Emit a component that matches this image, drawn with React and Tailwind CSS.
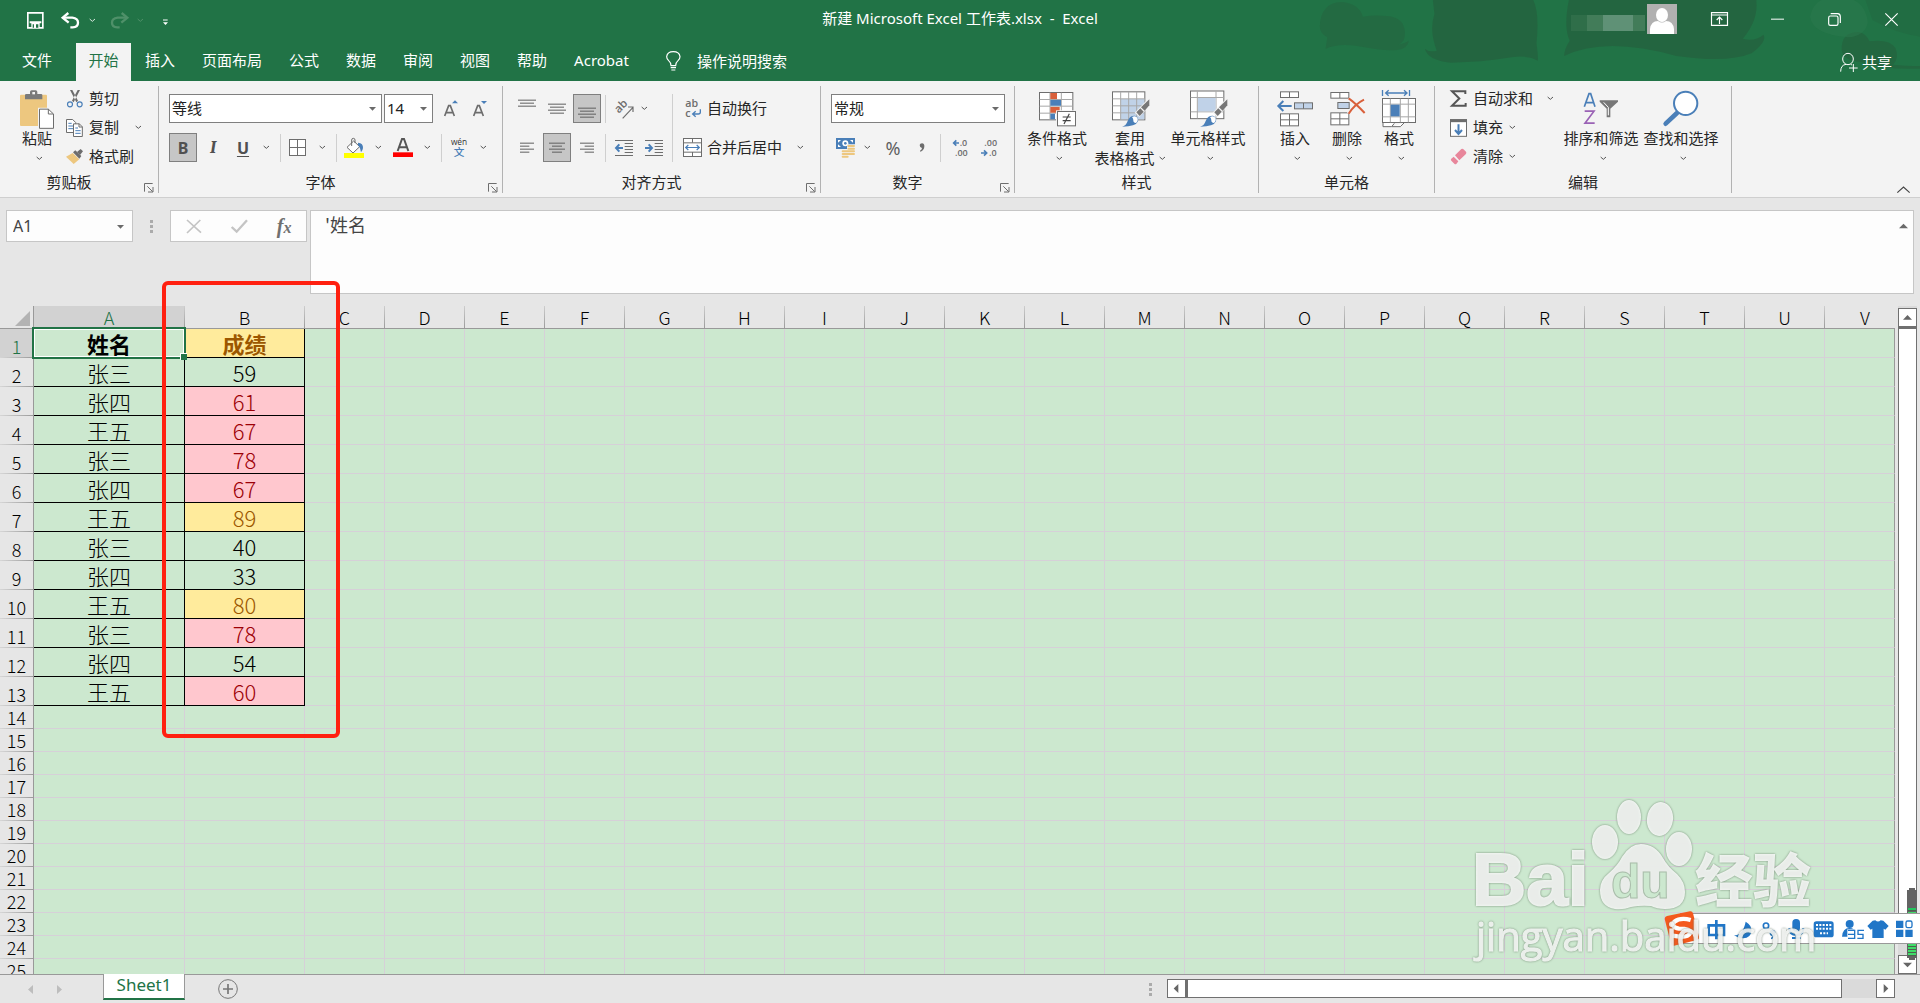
import React from 'react';

const GRAY = '#6d6d6d';
const BLUE = '#4a7fb8';
const SAND = '#edc77f';
const RUST = '#d9603b';

const ROWS = [
    ['姓名', '成绩', 'yellow'],
    ['张三', '59'],
    ['张四', '61', 'pink'],
    ['王五', '67', 'pink'],
    ['张三', '78', 'pink'],
    ['张四', '67', 'pink'],
    ['王五', '89', 'yellow'],
    ['张三', '40'],
    ['张四', '33'],
    ['王五', '80', 'yellow'],
    ['张三', '78', 'pink'],
    ['张四', '54'],
    ['王五', '60', 'pink'],
];

const TONES = {
    yellow: 'bg-[#ffeb9c] text-[#9c5700]',
    pink: 'bg-[#ffc7ce] text-[#9c0006]',
    none: 'bg-[#cce8cf] text-black',
};

const COLUMNS = 'ABCDEFGHIJKLMNOPQRSTUV'.split('');
const EMPTY_ROWS = [14, 15, 16, 17, 18, 19, 20, 21, 22, 23, 24, 25];
const MENU = ['插入', '页面布局', '公式', '数据', '审阅', '视图', '帮助', 'Acrobat'];

// Icons are drawn on a grid of three units to the pixel
function Icon({ w, h, className = '', children }) {
    return (
        <svg width={w} height={h} viewBox={`0 0 ${w * 3} ${h * 3}`} fill="none" className={`shrink-0 overflow-visible ${className}`} aria-hidden="true">
            {children}
        </svg>
    );
}

const Chevron = ({ color = '#555' }) => (
    <Icon w={7} h={5}>
        <path d="M2 3l8 7 8-7" stroke={color} strokeWidth="3" />
    </Icon>
);

const Triangle = ({ className = '' }) => (
    <Icon w={7} h={4} className={className}>
        <path d="M0 0h21L10.500 11z" fill="#6a6a6a" />
    </Icon>
);

const PasteIcon = () => (
    <Icon w={34} h={39}>
        <rect x="0" y="14" width="81" height="94" rx="3" fill={SAND} />
        <path d="M15 28V15q0-3 4-3h11V6q0-5 5-5h12q5 0 5 5v6h11q4 0 4 3v13z" fill="#7a7a7a" />
        <rect x="37" y="6" width="8" height="7" fill="#f3f3f3" />
        <path d="M54 53h35l16 16v50H54z" fill="#f3f3f3" />
        <path d="M58.500 57.500H85L100.500 72v43h-42z" fill="#fff" stroke={GRAY} strokeWidth="3" />
        <path d="M85 57v15h15" stroke={GRAY} strokeWidth="3" />
    </Icon>
);

const CutIcon = () => (
    <Icon w={16} h={18}>
        <path d="M9 0l7 0 17 32-5 5zM39 0l-7 0-17 32 5 5z" fill={GRAY} />
        <circle cx="9" cy="43" r="7.500" stroke={BLUE} strokeWidth="3.500" />
        <circle cx="38" cy="43" r="7.500" stroke={BLUE} strokeWidth="3.500" />
    </Icon>
);

const CopyIcon = () => (
    <Icon w={17} h={18}>
        <path d="M1.500 1.500H20l9 9v30H1.500z" fill="#fff" stroke={GRAY} strokeWidth="3" />
        <path d="M7 13h10M7 21h14M7 29h14" stroke={BLUE} strokeWidth="3" />
        <path d="M22.500 14.500H40l9 9v29H22.500z" fill="#fff" stroke={GRAY} strokeWidth="3" />
        <path d="M39 14v10h10" stroke={GRAY} strokeWidth="3" />
        <path d="M28 27h8M28 35h16M28 43h16" stroke={BLUE} strokeWidth="3" />
    </Icon>
);

const BrushIcon = () => (
    <Icon w={17} h={15}>
        <path d="M0 23L20 12l20 19-17 14z" fill={SAND} />
        <path d="M21 10l7-6 18 17-6 8z" fill={GRAY} />
        <path d="M33 9L44 0l7 7-9 11z" fill={GRAY} />
    </Icon>
);

const GrowFont = ({ down }) => (
    <Icon w={14} h={17}>
        <path d="M2 48L14 17h5l12 31M7 38h19" stroke={GRAY} strokeWidth="5" />
        {down ? <path d="M24 3h18l-9 9z" fill={BLUE} /> : <path d="M24 10h18L33 1z" fill={BLUE} />}
    </Icon>
);

const BorderIcon = () => (
    <Icon w={17} h={17}>
        <rect x="1.500" y="1.500" width="48" height="48" fill="#fff" stroke={GRAY} strokeWidth="3" />
        <path d="M25.500 2v47M2 25.500h47" stroke={GRAY} strokeWidth="3" />
    </Icon>
);

const FillIcon = () => (
    <Icon w={20} h={20}>
        <path d="M9 28L29 9l18 17-20 19z" fill="#fff" stroke={GRAY} strokeWidth="3" />
        <path d="M23 24V6q0-5 5-5t5 5v9" stroke={GRAY} strokeWidth="3" />
        <path d="M42 14q16 1 15 16-1 8-6 13-1-14-9-22z" fill={BLUE} />
        <rect x="0" y="45" width="60" height="15" fill="#ff0" />
    </Icon>
);

const FontColorIcon = () => (
    <Icon w={20} h={19}>
        <path d="M14 39L27 3h6l13 36M19 28h22" stroke="#555" strokeWidth="6" />
        <rect x="0" y="43" width="60" height="14" fill="#f00" />
    </Icon>
);

// Paragraph lines; each entry is [x1, x2, y]
function Lines({ w = 18, h = 18, lines }) {
    return (
        <Icon w={w} h={h}>
            {lines.map(([a, b, y]) => (
                <path key={y} d={`M${a} ${y}.5H${b}`} stroke="#5f5f5f" strokeWidth="3" />
            ))}
        </Icon>
    );
}

const OrientationIcon = () => (
    <Icon w={20} h={20}>
        <text x="14" y="44" transform="rotate(-45 14 44)" fontSize="34" fontWeight="600" fill={GRAY} fontFamily="Open Sans">ab</text>
        <path d="M26 58L57 25M42 24h15v15" stroke={GRAY} strokeWidth="3.500" />
    </Icon>
);

const IndentIcon = ({ right }) => (
    <Icon w={18} h={18}>
        <path d="M0 4.500h54M0 49.500h54M29 13.500h25M29 22.500h25M29 31.500h25M29 40.500h25" stroke={GRAY} strokeWidth="3" />
        {right
            ? <path d="M0 27h19M11 16l10 11-10 11" stroke={BLUE} strokeWidth="6" />
            : <path d="M4 27h20M13 16L3 27l10 11" stroke={BLUE} strokeWidth="6" />}
    </Icon>
);

const WrapIcon = () => (
    <Icon w={19} h={18}>
        <text x="7" y="21" fontSize="32" fontWeight="600" fill={GRAY} fontFamily="Open Sans">ab</text>
        <text x="7" y="50" fontSize="32" fontWeight="600" fill={GRAY} fontFamily="Open Sans">c</text>
        <path d="M52 28v9q0 5-6 5H30M38 34l-9 8 9 8" stroke={BLUE} strokeWidth="4" />
    </Icon>
);

const MergeIcon = () => (
    <Icon w={19} h={19}>
        <rect x="1.500" y="1.500" width="54" height="54" fill="#fff" stroke={GRAY} strokeWidth="3" />
        <path d="M2 14.500h54M2 42.500h54M28.500 2v12M28.500 42v13" stroke={GRAY} strokeWidth="3" />
        <path d="M8 28.500h41M16 21l-8 7.500 8 7.500M41 21l8 7.500-8 7.500" stroke={BLUE} strokeWidth="3.500" />
    </Icon>
);

const MoneyIcon = () => (
    <Icon w={19} h={19}>
        <rect x="0" y="0" width="57" height="33" fill={BLUE} />
        <path d="M6 6h9l-9 8zM51 6h-9l9 8zM6 27h9l-9-8z" fill="#fff" />
        <circle cx="28" cy="16" r="9" fill="#fff" />
        <circle cx="28" cy="16" r="4" fill={BLUE} />
        <path d="M33 19h24v38H16V34h17z" fill="#f3f3f3" />
        <path d="M37 24h17M37 32h17M37 40h17M37 48h17M20 40h15M20 48h15M20 56h15" stroke={SAND} strokeWidth="6" strokeLinecap="round" />
    </Icon>
);

function DecimalIcon({ more }) {
    return (
        <Icon w={17} h={18}>
            <text x={more ? 20 : 10} y="22" fontSize="27" fontWeight="600" fill={GRAY} fontFamily="Open Sans">{more ? '.0' : '.00'}</text>
            <text x={more ? 6 : 24} y="51" fontSize="27" fontWeight="600" fill={GRAY} fontFamily="Open Sans">{more ? '.00' : '.0'}</text>
            {more
                ? <path d="M2 12h16M10 4l-8 8 8 8" stroke={BLUE} strokeWidth="5" />
                : <path d="M0 42h17M9 34l8 8-8 8" stroke={BLUE} strokeWidth="5" />}
        </Icon>
    );
}

const CondIcon = () => (
    <Icon w={36} h={36}>
        <rect x="1.500" y="4.500" width="100" height="82" fill="#fff" stroke={GRAY} strokeWidth="3" />
        <path d="M33 5v81M67 5v81M2 25.500h99M2 45.500h99M2 66.500h99" stroke="#a8a8a8" strokeWidth="3" />
        <path d="M34 6h20v18H34zM34 48h28v17H34z" fill={RUST} />
        <path d="M34 27h32v17H34zM34 68h14v17H34z" fill={BLUE} />
        <rect x="51" y="58" width="62" height="50" fill="#f3f3f3" />
        <rect x="55.500" y="61.500" width="54" height="43" fill="#fff" stroke={GRAY} strokeWidth="3" />
        <path d="M71 78h24M71 89h24M91 68L75 99" stroke="#444" strokeWidth="3.500" />
    </Icon>
);

const PaintBrush = () => (
    <>
        <path d="M114 20v24L82 78 68 65 99 33z" fill="#f3f3f3" />
        <path d="M112 25v18l-14 16-11-10z" fill="#777" />
        <path d="M85 52l10 10-12 13-10-11z" fill="#777" />
        <path d="M30 107q12-2 17-17 6-17 22-16 12 5 9 17-6 16-48 16z" fill={BLUE} />
        <path d="M60 78q10-6 16 2 4 8-4 16-9-1-8-8 0-6-4-10z" fill="#fff" />
    </>
);

const TableFormatIcon = () => (
    <Icon w={36} h={36}>
        <rect x="1.500" y="2.500" width="97" height="84" fill="#fff" stroke={GRAY} strokeWidth="3" />
        <rect x="26" y="24" width="71" height="61" fill="#c0d2e8" />
        <path d="M26 3v83M50 3v83M74 3v83M2 23.500h96M2 44.500h96M2 65.500h96" stroke="#a8a8a8" strokeWidth="3" />
        <PaintBrush />
    </Icon>
);

const CellStyleIcon = () => (
    <Icon w={36} h={36}>
        <rect x="1.500" y="0" width="100" height="83" fill="#fff" stroke={GRAY} strokeWidth="3" />
        <path d="M22 1v81M78 1v81M2 19.500h99M2 62.500h99" stroke="#a8a8a8" strokeWidth="3" />
        <rect x="24" y="21" width="53" height="40" fill="#c0d2e8" />
        <PaintBrush />
    </Icon>
);

const InsertIcon = () => (
    <Icon w={36} h={36}>
        <g stroke={GRAY} strokeWidth="3" fill="#fff">
            <rect x="10.500" y="2.500" width="54" height="17" />
            <path d="M37.500 3v16" />
            <rect x="10.500" y="68.500" width="54" height="36" />
            <path d="M37.500 69v35M11 86.500h53" />
            <rect x="52.500" y="35.500" width="54" height="18" fill="#c0d2e8" />
            <path d="M79.500 36v17" />
        </g>
        <path d="M4 45h40M19 30L4 45l15 15" stroke={BLUE} strokeWidth="6" />
    </Icon>
);

const DeleteIcon = () => (
    <Icon w={34} h={36}>
        <g stroke={GRAY} strokeWidth="3" fill="#fff">
            <rect x="2.500" y="4.500" width="54" height="17" />
            <path d="M29.500 5v16" />
            <rect x="2.500" y="65.500" width="54" height="36" />
            <path d="M29.500 66v35M3 83.500h53" />
            <rect x="23.500" y="34.500" width="34" height="18" fill="#c0d2e8" />
        </g>
        <path d="M56 22q20 14 48 44M102 26Q74 40 56 68" stroke="#f3f3f3" strokeWidth="12" />
        <path d="M56 22q20 14 48 44M102 26Q74 40 56 68" stroke={RUST} strokeWidth="6" />
    </Icon>
);

const FormatIcon = () => (
    <Icon w={34} h={38}>
        <path d="M1.500 0v18M82.500 0v18M10 9h66M20 1l-9 8 9 8M66 1l9 8-9 8" stroke={BLUE} strokeWidth="4" />
        <path d="M3 98v12h26l8-10M30 110h25l12-12" stroke={GRAY} strokeWidth="3" fill="#fff" />
        <rect x="1.500" y="25.500" width="99" height="72" fill="#fff" stroke={GRAY} strokeWidth="3" />
        <path d="M25 26v71M55 26v71M79 26v71M2 42.500h98M2 80.500h98" stroke="#a8a8a8" strokeWidth="3" />
        <rect x="26" y="44" width="27" height="35" fill={BLUE} />
    </Icon>
);

const SumIcon = () => (
    <Icon w={17} h={17}>
        <path d="M46 12V3.500H6l22 22-22 22h41V39" stroke="#555" strokeWidth="6" />
    </Icon>
);

const FillDownIcon = () => (
    <Icon w={17} h={18}>
        <rect x="1.500" y="2" width="48" height="50" fill="#fff" stroke={GRAY} strokeWidth="3" />
        <path d="M0 5h51" stroke={GRAY} strokeWidth="9" />
        <path d="M25.500 16v27M15 33l10.500 12L36 33" stroke={BLUE} strokeWidth="6" />
    </Icon>
);

const EraserIcon = () => (
    <Icon w={17} h={17}>
        <path d="M15 22L34 3q4-2 8 2l6 6q3 4-1 8L28 37z" fill="#e8869b" />
        <path d="M11 26L25 40l-6 8q-3 2-6-1l-9-9q-3-3 0-6z" fill="#e8869b" />
    </Icon>
);

const SortIcon = () => (
    <Icon w={36} h={36}>
        <path d="M4 47L18 8h5l13 39M9 35h22" stroke={BLUE} strokeWidth="5" />
        <path d="M5 60.500h28L6 96.500h29" stroke="#9a62b5" strokeWidth="5" />
        <path d="M50 28h55v4L82 53v26H71V53L50 32z" fill="#777" />
        <path d="M62 34l14 15v24" stroke="#fff" strokeWidth="3" />
    </Icon>
);

const FindIcon = () => (
    <Icon w={36} h={36}>
        <path d="M8 98L42 66" stroke={BLUE} strokeWidth="14" strokeLinecap="round" />
        <circle cx="68" cy="37" r="35" fill="#fff" stroke={BLUE} strokeWidth="6" />
    </Icon>
);

const UndoIcon = ({ color }) => (
    <Icon w={19} h={17}>
        <path d="M6 17h28q17 2 17 15t-16 14H28" stroke={color} strokeWidth="7" />
        <path d="M22 3L5 17l18 15" stroke={color} strokeWidth="7" />
    </Icon>
);

function Tool({ label, active, onClick, children }) {
    return (
        <button
            type="button"
            aria-label={label}
            onClick={onClick}
            className={`flex h-[29px] w-7 shrink-0 items-center justify-center ${active ? 'border border-[#7f7f7f] bg-[#c6c6c6]' : ''}`}
        >
            {children}
        </button>
    );
}

function WideTool({ label, children }) {
    return (
        <div className="flex h-[29px] items-center">
            <button type="button" aria-label={label} className="flex h-full w-[33px] items-center justify-center">{children}</button>
            <Drop label={`${label}选项`} />
        </div>
    );
}

const Drop = ({ label }) => (
    <button type="button" aria-label={label} className="flex h-[29px] w-4 shrink-0 items-center justify-center">
        <Chevron />
    </button>
);

const Divider = () => <div className="h-7 w-px shrink-0 bg-[#cfcfcf]" />;

function BigButton({ icon, label, second, className }) {
    return (
        <button type="button" className={`flex shrink-0 flex-col items-center whitespace-nowrap ${className}`}>
            <span className="flex h-[38px] items-center">{icon}</span>
            <span className="leading-5">{label}</span>
            {second ? (
                <span className="flex items-center gap-1 leading-5">{second}<Chevron /></span>
            ) : (
                <span className="flex h-5 items-center pl-1"><Chevron /></span>
            )}
        </button>
    );
}

function SmallButton({ icon, label, chevron }) {
    return (
        <button type="button" className="flex h-[29px] items-center gap-1.5 whitespace-nowrap">
            <span className="flex w-[17px] justify-center">{icon}</span>
            <span>{label}</span>
            {chevron && <span className={chevron}><Chevron /></span>}
        </button>
    );
}

function Group({ label, launcher, className, children }) {
    return (
        <section aria-label={label} className="mt-[5px] flex h-[107px] shrink-0 border-r border-[#b2b2b2]">
            <div className={`relative flex flex-col ${className}`}>
                <div className="h-[88px]">{children}</div>
                <div className={`text-center leading-[22px] ${launcher ? 'pr-5' : ''}`}>{label}</div>
                {launcher && (
                    <button type="button" aria-label={`${label}设置`} className="absolute right-1 bottom-0">
                        <Icon w={10} h={10}>
                            <path d="M1.500 26V1.500H26M10 10l16 16M27 12v15H12" stroke={GRAY} strokeWidth="3" />
                        </Icon>
                    </button>
                )}
            </div>
        </section>
    );
}

function Picker({ label, value, options, className }) {
    return (
        <div className={`relative h-[29px] border border-[#7f7f7f] bg-white ${className}`}>
            <select aria-label={label} defaultValue={value} className="h-full w-full appearance-none bg-transparent px-0.5 text-[#222] outline-none">
                {options.map((o) => <option key={o}>{o}</option>)}
            </select>
            <Triangle className="pointer-events-none absolute top-3 right-[5px]" />
        </div>
    );
}

// Speech bubbles behind the right end of the title bar
const Bubbles = () => (
    <svg className="pointer-events-none absolute top-0 right-0" width="620" height="81" viewBox="0 0 1568 243" preserveAspectRatio="none" aria-hidden="true">
        <g fill="#24643f">
            <path d="M50 80Q52 8 105 6q44 4 54 44 30-6 60-2 50 4 46 60-2 20-16 26 20-6 26-12-2 24-30 28-30 4-100-12-50-8-80 8 0-2 4-34-18-12-19-32z" opacity=".6" />
            <path d="M336 0H590q16 40 8 130 4 30 4 52-30-20-80-8-60 12-140 14-60-8-66-42 10 12 30 6-20-60-6-110z" opacity=".9" />
            <path d="M680 0h474q6 60-34 116 30 10 52-12 10 20-30 56-60 30-190 8-180-60-284 0 0-20 14-46-16-40-2-122z" opacity=".9" />
            <path d="M1370 150q-2-54 42-54 20 4 28 28 50-8 66 20 10 30-6 50 30 4 68 4v8q-90 4-150-20-46-6-48-36z" opacity=".8" />
            <path d="M1430 0h138v110q-60-10-120-50z" opacity=".4" />
        </g>
        <path d="M1290 50Q1300-10 1360-12q70 6 76 80-8 40-50 44-90-10-96-62z" fill="#2b7a4e" opacity=".5" />
    </svg>
);

function TitleBar() {
    return (
        <div className="relative flex h-[43px] items-start justify-between">
            <div className="flex h-10 items-center pl-[27px]">
                <button type="button" aria-label="保存">
                    <Icon w={17} h={17}>
                        <path d="M2.500 2.500h45v45h-45z" stroke="#fff" strokeWidth="5" />
                        <path d="M8 28h35v6H8zM13 34h25v13H13z" fill="#fff" />
                        <path d="M17 37h4v10h-4zM27 37h7v10h-7z" fill="#217346" />
                    </Icon>
                </button>
                <button type="button" aria-label="撤消" className="ml-[17px]"><UndoIcon color="#fff" /></button>
                <span className="ml-[9px]"><Chevron color="#d8e8de" /></span>
                <button type="button" aria-label="恢复" className="ml-3.5 -scale-x-100"><UndoIcon color="#4f9069" /></button>
                <span className="ml-2"><Chevron color="#4f9069" /></span>
                <button type="button" aria-label="自定义快速访问工具栏" className="ml-[18px] pt-1">
                    <Icon w={7} h={7}>
                        <path d="M3 3h14" stroke="#fff" strokeWidth="3" />
                        <path d="M3 10h15l-7.500 8z" fill="#fff" />
                    </Icon>
                </button>
            </div>
            <h1 className="absolute inset-x-0 top-0 text-center leading-9 whitespace-pre">新建 Microsoft Excel 工作表.xlsx  -  Excel</h1>
            <div className="relative flex h-[38px] items-center pr-[22px]">
                <div className="mr-0.5 flex h-4 pt-1" aria-hidden="true">
                    <div className="h-4 w-4 bg-[#2f6e49]" />
                    <div className="h-4 w-4 bg-[#427c59]" />
                    <div className="h-4 w-[30px] bg-[#5f9176]" />
                    <div className="h-4 w-3 bg-[#427c59]" />
                </div>
                <svg width="30" height="30" viewBox="0 0 30 30" role="img" aria-label="帐户">
                    <rect width="30" height="30" fill="#b0b0b0" />
                    <ellipse cx="15" cy="11" rx="6" ry="7" fill="#fff" />
                    <path d="M3 30V25q1-8 8-8 4 3 8 0 7 0 8 8v5z" fill="#fff" />
                </svg>
                <button type="button" aria-label="功能区显示选项" className="ml-[34px]">
                    <Icon w={17} h={14}>
                        <path d="M1.500 2h48v38h-48zM2 9h47" stroke="#fff" strokeWidth="3.500" />
                        <path d="M25.500 36V16M17 24l8.500-9 8.500 9" stroke="#fff" strokeWidth="3.500" />
                    </Icon>
                </button>
                <button type="button" aria-label="最小化" className="ml-[43px]">
                    <Icon w={13} h={13}><path d="M0 18.500h39" stroke="#fff" strokeWidth="3" /></Icon>
                </button>
                <button type="button" aria-label="还原" className="ml-11">
                    <Icon w={13} h={13}>
                        <rect x="2" y="9" width="28" height="28" rx="5" stroke="#fff" strokeWidth="3.500" />
                        <path d="M8 2h21q8 1 8 9v19" stroke="#fff" strokeWidth="3.500" />
                    </Icon>
                </button>
                <button type="button" aria-label="关闭" className="ml-11">
                    <Icon w={13} h={13}><path d="M1 1l37 37M38 1L1 38" stroke="#fff" strokeWidth="3.500" /></Icon>
                </button>
            </div>
        </div>
    );
}

function Menu() {
    return (
        <nav className="relative flex h-[38px] items-stretch leading-[34px]">
            <button type="button" className="w-[76px] pb-1 pl-[22px] text-left">文件</button>
            <button type="button" className="w-[55px] bg-[#f3f3f3] pb-1 text-center text-[#217346]">开始</button>
            {MENU.map((item) => (
                <button key={item} type="button" className="ml-px px-[13px] pb-1">{item}</button>
            ))}
            <button type="button" className="ml-6 flex items-center gap-4 pb-0.5">
                <Icon w={15} h={21}>
                    <path d="M15 44q0-9-7-15-6-6-6-12Q4 2 22 2t20 15q0 6-6 12-7 6-7 15z" stroke="#fff" strokeWidth="3.500" />
                    <path d="M14 50h16M16 57h12" stroke="#fff" strokeWidth="3.500" />
                </Icon>
                操作说明搜索
            </button>
            <button type="button" className="ml-auto flex items-center gap-1 pr-7">
                <Icon w={18} h={19}>
                    <ellipse cx="24" cy="18" rx="16" ry="17" stroke="#fff" strokeWidth="3" />
                    <path d="M2 56q0-20 16-22M32 34l4 2M40 33v24M27 45h26" stroke="#fff" strokeWidth="3" />
                </Icon>
                共享
            </button>
        </nav>
    );
}

function Ribbon() {
    const [bold, setBold] = React.useState(true);

    return (
        <div className="flex h-[117px] border-b border-[#cfcfcf] bg-[#f3f3f3] text-[#262626]">
            <Group label="剪贴板" launcher className="w-[158px]">
                <div className="flex pl-[17px]">
                    <BigButton icon={<PasteIcon />} label="粘贴" className="mt-1 w-10" />
                    <div className="-mt-0.5 ml-[9px]">
                        <SmallButton icon={<CutIcon />} label="剪切" />
                        <SmallButton icon={<CopyIcon />} label="复制" chevron="ml-2.5" />
                        <SmallButton icon={<BrushIcon />} label="格式刷" />
                    </div>
                </div>
            </Group>

            <Group label="字体" launcher className="w-[343px]">
                <div className="pt-2 pl-2.5">
                    <div className="flex items-center">
                        <Picker label="字体名称" value="等线" options={['等线', '宋体', '微软雅黑']} className="w-[213px]" />
                        <Picker label="字号" value="14" options={['11', '12', '14', '16']} className="ml-0.5 w-[49px]" />
                        <div className="ml-1 flex gap-px">
                            <Tool label="增大字号"><GrowFont /></Tool>
                            <Tool label="减小字号"><GrowFont down /></Tool>
                        </div>
                    </div>
                    <div className="mt-2.5 flex items-center">
                        <div className="mr-px flex gap-0.5 text-base text-[#505050]">
                            <Tool label="加粗" active={bold} onClick={() => setBold(!bold)}><b>B</b></Tool>
                            <Tool label="倾斜"><b className="font-serif text-lg italic">I</b></Tool>
                            <Tool label="下划线"><b className="underline underline-offset-2">U</b></Tool>
                        </div>
                        <Drop label="下划线选项" />
                        <div className="w-1.5" />
                        <Divider />
                        <WideTool label="边框"><BorderIcon /></WideTool>
                        <div className="w-1.5" />
                        <Divider />
                        <WideTool label="填充颜色"><FillIcon /></WideTool>
                        <WideTool label="字体颜色"><FontColorIcon /></WideTool>
                        <div className="w-1.5" />
                        <Divider />
                        <WideTool label="拼音指南">
                            <Icon w={18} h={20}>
                                <text x="27" y="20" textAnchor="middle" fontSize="25" fill="#333" fontFamily="Open Sans">wén</text>
                                <text x="27" y="55" textAnchor="middle" fontSize="32" fontWeight="500" fill={BLUE} fontFamily="Noto Sans CJK SC">文</text>
                            </Icon>
                        </WideTool>
                    </div>
                </div>
            </Group>

            <Group label="对齐方式" launcher className="w-[317px]">
                <div className="flex pt-2 pl-2.5">
                    <div className="flex flex-col gap-2.5">
                        <div className="flex items-center gap-0.5">
                            <Tool label="顶端对齐"><Lines lines={[[0, 54, 0], [6, 48, 9], [0, 54, 18]]} /></Tool>
                            <Tool label="垂直居中"><Lines lines={[[0, 54, 12], [6, 48, 21], [0, 54, 30], [6, 48, 39]]} /></Tool>
                            <Tool label="底端对齐" active><Lines lines={[[0, 54, 24], [6, 48, 33], [0, 54, 42], [6, 48, 51]]} /></Tool>
                            <div className="flex items-center px-0.5"><Divider /></div>
                            <Tool label="方向"><OrientationIcon /></Tool>
                            <button type="button" aria-label="方向选项" className="-ml-0.5 flex w-3 justify-center"><Chevron /></button>
                        </div>
                        <div className="flex items-center gap-0.5">
                            <Tool label="左对齐"><Lines lines={[[6, 48, 12], [6, 34, 21], [6, 48, 30], [6, 34, 39]]} /></Tool>
                            <Tool label="居中" active><Lines lines={[[3, 51, 12], [12, 42, 21], [3, 51, 30], [12, 42, 39]]} /></Tool>
                            <Tool label="右对齐"><Lines lines={[[6, 48, 12], [20, 48, 21], [6, 48, 30], [20, 48, 39]]} /></Tool>
                            <div className="flex items-center px-0.5"><Divider /></div>
                            <Tool label="减少缩进量"><IndentIcon /></Tool>
                            <Tool label="增加缩进量"><IndentIcon right /></Tool>
                        </div>
                    </div>
                    <div className="ml-1 w-px bg-[#cfcfcf]" />
                    <div className="flex flex-col gap-2.5 pl-2.5">
                        <button type="button" className="flex h-[29px] items-center gap-[5px]"><WrapIcon />自动换行</button>
                        <div className="flex h-[29px] items-center">
                            <button type="button" className="flex items-center gap-[5px]"><MergeIcon />合并后居中</button>
                            <div className="w-2.5" />
                            <Drop label="合并选项" />
                        </div>
                    </div>
                </div>
            </Group>

            <Group label="数字" launcher className="w-[193px]">
                <div className="pt-2 pl-2.5">
                    <Picker label="数字格式" value="常规" options={['常规', '数字', '货币', '百分比']} className="w-[174px]" />
                    <div className="mt-2.5 flex items-center">
                        <Tool label="会计数字格式"><MoneyIcon /></Tool>
                        <Drop label="会计数字格式选项" />
                        <div className="ml-1 flex gap-px text-[#606060]">
                            <Tool label="百分比样式"><span className="text-lg">%</span></Tool>
                            <Tool label="千位分隔样式">
                                <Icon w={6} h={9}><path d="M2 6q1-5 7-5 8 1 7 10-1 11-12 15-1-2-1-3 6-3 6-8-7-1-7-9z" fill={GRAY} /></Icon>
                            </Tool>
                        </div>
                        <div className="pr-1.5 pl-1"><Divider /></div>
                        <Tool label="增加小数位数"><DecimalIcon more /></Tool>
                        <Tool label="减少小数位数"><DecimalIcon /></Tool>
                    </div>
                </div>
            </Group>

            <Group label="样式" className="w-[243px]">
                <div className="flex pt-1 pl-[7px]">
                    <BigButton icon={<CondIcon />} label="条件格式" className="w-[70px]" />
                    <BigButton icon={<TableFormatIcon />} label="套用" second="表格格式" className="w-[76px]" />
                    <BigButton icon={<CellStyleIcon />} label="单元格样式" className="w-20" />
                </div>
            </Group>

            <Group label="单元格" className="w-[175px]">
                <div className="flex pt-1 pl-2.5">
                    <BigButton icon={<InsertIcon />} label="插入" className="w-[52px]" />
                    <BigButton icon={<DeleteIcon />} label="删除" className="w-[52px]" />
                    <BigButton icon={<FormatIcon />} label="格式" className="w-[52px]" />
                </div>
            </Group>

            <Group label="编辑" className="w-[296px]">
                <div className="flex pl-[15px]">
                    <div className="-mt-0.5 w-28">
                        <SmallButton icon={<SumIcon />} label="自动求和" chevron="ml-2" />
                        <SmallButton icon={<FillDownIcon />} label="填充" chevron="ml-0" />
                        <SmallButton icon={<EraserIcon />} label="清除" chevron="ml-0" />
                    </div>
                    <div className="flex gap-0.5 pt-1">
                        <BigButton icon={<SortIcon />} label="排序和筛选" className="w-[78px]" />
                        <BigButton icon={<FindIcon />} label="查找和选择" className="w-[78px]" />
                    </div>
                </div>
            </Group>

            <button type="button" aria-label="折叠功能区" className="mt-auto mr-2.5 mb-1 ml-auto">
                <Icon w={13} h={7}><path d="M1 20L19.500 3 38 20" stroke="#444" strokeWidth="3.500" /></Icon>
            </button>
        </div>
    );
}

const Dots = () => (
    <div className="flex flex-col gap-0.5" aria-hidden="true">
        <i className="h-[3px] w-[3px] bg-[#ababab]" />
        <i className="h-[3px] w-[3px] bg-[#ababab]" />
        <i className="h-[3px] w-[3px] bg-[#ababab]" />
    </div>
);

function FormulaBar() {
    return (
        <div className="flex h-[108px] items-start px-1.5 py-3">
            <div className="relative h-8 w-[127px] border border-[#c6c6c6] bg-[#fdfdfd]">
                <input aria-label="名称框" defaultValue="A1" className="h-full w-full bg-transparent pl-1.5 text-base text-[#444] outline-none" />
                <Triangle className="absolute top-3.5 right-2" />
            </div>
            <div className="flex h-8 w-[37px] items-center justify-center"><Dots /></div>
            <div className="flex h-8 w-[137px] items-center justify-around border border-[#c6c6c6] bg-[#fdfdfd]">
                <button type="button" aria-label="取消">
                    <Icon w={16} h={15}><path d="M3 3l42 38M43 3L3 42" stroke="#c4c4c4" strokeWidth="5" /></Icon>
                </button>
                <button type="button" aria-label="输入">
                    <Icon w={17} h={15}><path d="M2 24l15 14L48 4" stroke="#c4c4c4" strokeWidth="7" /></Icon>
                </button>
                <button type="button" aria-label="插入函数" className="font-['Liberation_Serif'] text-xl leading-7 font-bold text-[#707070] italic">
                    f<span className="text-base">x</span>
                </button>
            </div>
            <div className="relative ml-[3px] h-[84px] flex-1 border border-[#c6c6c6] bg-[#fdfdfd]">
                <textarea
                    aria-label="编辑栏"
                    defaultValue="'姓名"
                    className="block h-full w-full resize-none overflow-hidden bg-transparent pl-3.5 font-['Noto_Sans_CJK_SC',sans-serif] text-lg leading-[26px] text-[#444] outline-none"
                />
                <button type="button" aria-label="折叠编辑栏" className="absolute top-3 right-[5px]">
                    <Icon w={9} h={6}><path d="M0 16h27L13.500 2z" fill="#6a6a6a" /></Icon>
                </button>
            </div>
        </div>
    );
}

function RowHead({ n, active }) {
    return (
        <th
            scope="row"
            className={`border-r border-[#999] p-0 align-bottom text-lg leading-[22px] font-light ${active ? 'bg-[#d2d2d2] text-[#217346]' : 'text-black'}`}
        >
            <span className="block border-b [border-image:linear-gradient(to_right,#d8d8d8,#999)_1]">{n}</span>
        </th>
    );
}

function Sheet() {
    const rest = COLUMNS.slice(2);

    return (
        <div className="min-w-0 flex-1 overflow-hidden">
            <table className="w-full table-fixed border-separate border-spacing-0">
                <colgroup>
                    <col className="w-[34px]" />
                    <col className="w-[151px]" />
                    <col className="w-[120px]" />
                    {rest.map((c) => <col key={c} className={c === 'V' ? '' : 'w-20'} />)}
                </colgroup>
                <thead>
                    <tr className="h-[23px]">
                        <td className="border-r border-b border-[#999] bg-[#e6e6e6] p-0 align-bottom">
                            <Icon w={15} h={15} className="mb-0.5 ml-[15px] block"><path d="M45 0v45H0z" fill="#b3b3b3" /></Icon>
                        </td>
                        {COLUMNS.map((c) => (
                            <th
                                key={c}
                                scope="col"
                                className={`border-b border-[#999] p-0 text-lg leading-[22px] font-light ${c === 'A' ? 'bg-[#d2d2d2] text-[#217346]' : 'bg-[#e6e6e6] text-black'}`}
                            >
                                <span className={`block ${c === 'V' ? 'pl-2.5' : 'border-r [border-image:linear-gradient(to_bottom,#d0d0d0,#999)_1]'}`}>{c}</span>
                            </th>
                        ))}
                    </tr>
                </thead>
                <tbody>
                    {ROWS.map(([name, score, tone = 'none'], i) => (
                        <tr key={i} className="h-[29px] bg-[#e6e6e6]">
                            <RowHead n={i + 1} active={i === 0} />
                            <td className={`border-r border-b border-black bg-[#cce8cf] p-0 text-center text-[22px] leading-7 text-black ${i === 0 ? 'relative z-10 font-bold' : 'font-light'}`}>
                                {name}
                                {i === 0 && (
                                    <div className="absolute -inset-0.5 border-2 border-[#217346]">
                                        <div className="absolute inset-0 border border-white" />
                                        <i className="absolute -right-[3px] -bottom-[3px] h-[7px] w-[7px] border-t border-l border-white bg-[#217346]" />
                                    </div>
                                )}
                            </td>
                            <td className={`border-r border-b border-black p-0 text-center text-[22px] leading-7 ${i === 0 ? 'font-bold' : 'font-light'} ${TONES[tone]}`}>
                                {score}
                            </td>
                            {rest.map((c) => <td key={c} className={`border-r border-b border-b-[#d6d0d8] bg-[#cce8cf] ${c === 'V' ? 'border-r-[#999]' : 'border-r-[#d6d0d8]'}`} />)}
                        </tr>
                    ))}
                    {EMPTY_ROWS.map((n) => (
                        <tr key={n} className="h-[23px] bg-[#e6e6e6]">
                            <RowHead n={n} />
                            {COLUMNS.map((c) => <td key={c} className={`border-r border-b border-b-[#d6d0d8] bg-[#cce8cf] p-0 ${c === 'V' ? 'border-r-[#999]' : 'border-r-[#d6d0d8]'}`} />)}
                        </tr>
                    ))}
                </tbody>
            </table>
        </div>
    );
}

const ScrollButton = ({ label, d }) => (
    <button type="button" aria-label={label} className="flex h-[19px] w-[19px] shrink-0 items-center justify-center border border-[#707070] bg-white">
        <Icon w={9} h={9}><path d={d} fill="#666" /></Icon>
    </button>
);

function BottomBar() {
    return (
        <div className="flex h-7 items-start">
            <div className="flex h-7 w-[103px] items-center gap-6 pl-7">
                <Icon w={5} h={9}><path d="M15 0v27L0 13.500z" fill="#bdbdbd" /></Icon>
                <Icon w={5} h={9}><path d="M0 0v27l15-13.500z" fill="#bdbdbd" /></Icon>
            </div>
            <button type="button" className="relative -mt-px h-[26px] w-[82px] border-x border-b-2 border-x-[#999] border-b-[#217346] bg-white pb-0.5 text-[17px] leading-5 text-[#217346]">Sheet1</button>
            <button type="button" aria-label="新工作表" className="mt-1 ml-[33px]">
                <Icon w={20} h={20}>
                    <circle cx="30" cy="30" r="28" stroke="#777" strokeWidth="3" />
                    <path d="M30 15v30M15 30h30" stroke="#777" strokeWidth="5" />
                </Icon>
            </button>
            <div className="mr-[15px] ml-auto flex h-7 items-center"><Dots /></div>
            <div className="mt-1 mr-[25px] flex w-[728px] bg-[#dadada]">
                <ScrollButton label="向左滚动" d="M19 0v27L5 13.500z" />
                <div className="h-[19px] flex-[19] border border-l-2 border-[#707070] bg-white" />
                <div className="flex-1" />
                <ScrollButton label="向右滚动" d="M8 0v27l14-13.500z" />
            </div>
        </div>
    );
}

const Watermark = () => (
    <svg className="pointer-events-none absolute right-[94px] bottom-8 z-20 overflow-visible [filter:drop-shadow(0_0_1px_rgba(80,100,80,0.8))]" width="352" height="175" viewBox="0 0 352 175" role="img" aria-label="Baidu 经验">
        <g fill="#fff" opacity=".84">
            <text x="-2" y="109" fontSize="75" fontWeight="700" fontFamily="Liberation Sans" stroke="#fff" strokeWidth="2">Bai</text>
            <ellipse cx="131" cy="46" rx="13" ry="17" />
            <ellipse cx="155" cy="21" rx="12" ry="17" />
            <ellipse cx="186" cy="23" rx="13" ry="17" transform="rotate(8 186 23)" />
            <ellipse cx="205" cy="53" rx="13" ry="17" />
            <path d="M167 48q14 0 22 14 5 9 14 16 8 8 8 18 0 17-20 17-8 0-14-3-10-1-20 1-8 3-16 2-15-2-15-19 0-10 9-17 9-8 13-16 8-13 19-13z" />
            <text x="221" y="106" fontSize="58" fontWeight="900" fontFamily="Noto Sans CJK SC">经验</text>
            <text x="2" y="155" fontSize="40" fontFamily="Open Sans" stroke="#fff" strokeWidth="1">jingyan.baidu.com</text>
        </g>
        <text x="137" y="102" fontSize="48" fontFamily="Liberation Sans" fontWeight="700" fill="#cce8cf" stroke="#a9bdaa" strokeWidth="1">du</text>
    </svg>
);

function ImeBar() {
    return (
        <div className="absolute right-0 bottom-[59px] z-10 flex h-[31px] w-60 items-center border-y border-[#999] bg-white">
            <svg className="absolute -top-[3px] -left-4" width="36" height="36" viewBox="0 0 108 108" aria-hidden="true">
                <path d="M2 24q0-7 7-9L78 1q7-1 9 6l18 71q1 7-6 9l-69 17q-7 1-9-6z" fill="#f4591d" />
                <path d="M80 27Q50 18 31 32q-12 17 14 21 36 0 33 14-8 16-52 7" stroke="#fff" strokeWidth="13" fill="none" />
            </svg>
            <svg width="214" height="26" viewBox="0 0 642 78" className="mt-[5px] ml-[26px] shrink-0" aria-hidden="true">
                <g fill="#2176c7">
                    <path d="M8 22h46v29H8zM31 6v58" fill="none" stroke="#2176c7" strokeWidth="8" />
                    <path d="M119 11q-8 40-35 41 12 9 28 9 22-2 24-20 2-20-17-30z" />
                    <circle cx="180" cy="23" r="8" fill="none" stroke="#2176c7" strokeWidth="5" />
                    <path d="M199 35q12 2 9 14-4 14-13 15-2-3 4-9-9-3-8-11 1-9 8-9z" />
                    <rect x="259" y="3" width="23" height="38" rx="11" />
                    <path d="M250 31q0 20 21 20t21-20M271 52v10M258 60h26" fill="none" stroke="#2176c7" strokeWidth="6" />
                    <rect x="323" y="10" width="60" height="48" rx="8" />
                    <path d="M330 21h46M330 32h46M342 46h24" stroke="#fff" strokeWidth="6" strokeDasharray="6 4" />
                    <circle cx="431" cy="18" r="12" />
                    <path d="M408 56q2-26 22-26 16 1 22 12v14h-44z" />
                    <path d="M424 34h50v30h-50z" fill="#fff" />
                    <path d="M426 37h20v24h-20M426 49h20M474 37h-18v12h15v12h-17" fill="none" stroke="#2176c7" strokeWidth="4" />
                    <path d="M500 8l8-1q8 7 16 0l8 1 16 16-10 11-5-3v28h-34V32l-5 3-10-11z" />
                    <path d="M570 8h22v22h-22zM570 35h22v22h-22zM598 35h22v22h-22z" />
                    <rect x="600" y="9" width="18" height="20" rx="5" fill="none" stroke="#2176c7" strokeWidth="4" />
                </g>
            </svg>
        </div>
    );
}

// Level meter that sits across the vertical scroll bar
const Meter = () => (
    <svg className="absolute right-[3px] bottom-[43px]" width="10" height="72" viewBox="0 0 10 72" aria-hidden="true">
        <path d="M2 0h6v2h2v68H8v2H2v-2H0V2h2z" fill="#636363" />
        <path d="M1 20h8v2H1z" fill="#22c55e" />
        <path d="M1 24h8v44H1z" fill="#3fdc68" />
        <path d="M5 22v46" stroke="#4c6150" strokeWidth="8" strokeDasharray="1 2" />
    </svg>
);

export default function App() {
    return (
        <div className="relative flex h-screen flex-col overflow-hidden bg-[#e6e6e6] font-['Noto_Sans','Noto_Sans_CJK_SC',sans-serif] text-[15px]">
            <header className="relative bg-[#217346] text-white">
                <Bubbles />
                <TitleBar />
                <Menu />
            </header>
            <Ribbon />
            <FormulaBar />
            <main className="flex min-h-0 flex-1 border-b border-[#999] font-['Noto_Sans_CJK_SC',sans-serif]">
                <Sheet />
                <div className="mx-[3px] flex flex-col bg-[#dadada] pt-0.5">
                    <ScrollButton label="向上滚动" d="M0 20h27L13.500 6z" />
                    <div className="flex-1 border border-t-2 border-[#707070] bg-white" />
                    <div className="h-8" />
                    <ScrollButton label="向下滚动" d="M0 8h27L13.500 22z" />
                </div>
            </main>
            <BottomBar />
            <div className="pointer-events-none absolute top-[281px] left-[162px] z-10 h-[457px] w-[178px] rounded-md border-4 border-[#ff2010]" />
            <Meter />
            <ImeBar />
            <Watermark />
        </div>
    );
}
